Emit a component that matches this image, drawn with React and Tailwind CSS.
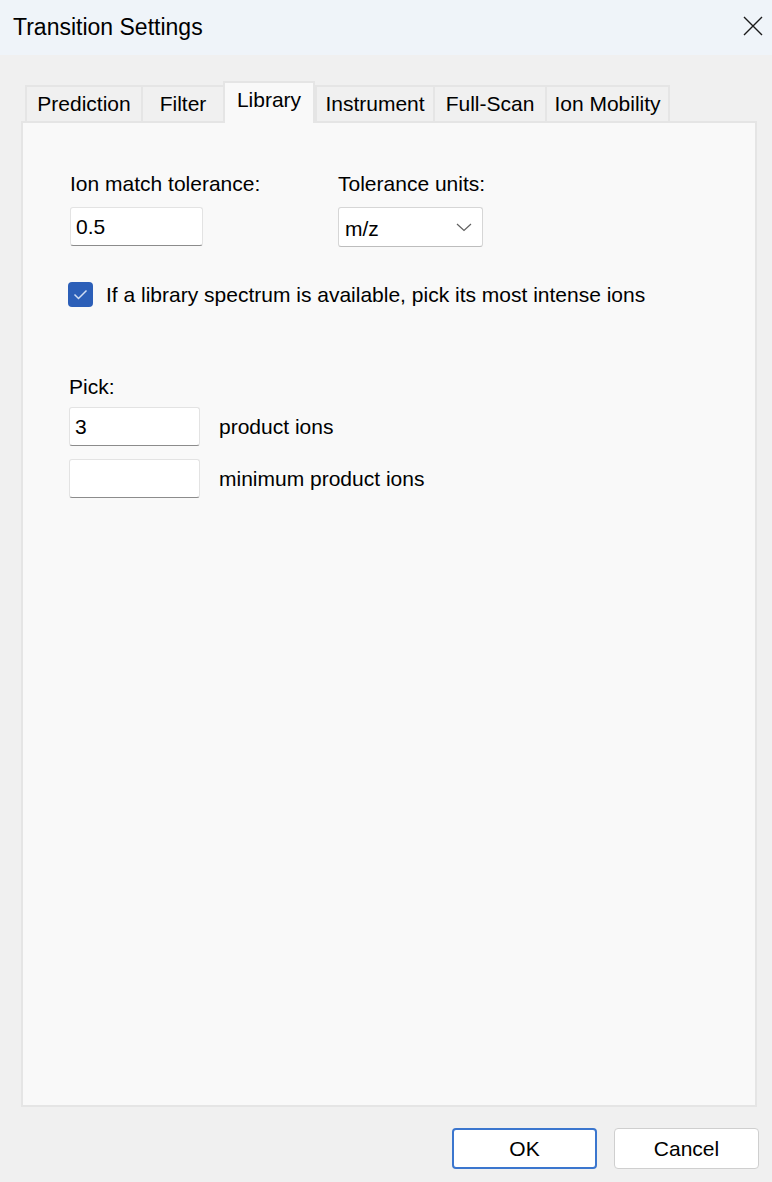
import React from 'react';

const tabs = [
    { label: 'Prediction', w: 'w-[118px]' },
    { label: 'Filter', w: 'w-[84px]' },
    { label: 'Library', w: 'w-[92px]', active: true },
    { label: 'Instrument', w: 'w-[120px]' },
    { label: 'Full-Scan', w: 'w-[114px]' },
    { label: 'Ion Mobility', w: 'w-[125px]' },
];

const TextBox = ({ value, className = '' }) => (
    <div
        className={`h-[39px] bg-white border border-[#e3e3e3] border-b-[#8c8c8c] rounded-[3px] flex items-center pl-[5px] ${className}`}
    >
        {value}
    </div>
);

const App = () => {
    return (
        <div
            className="w-[772px] h-[1182px] bg-[#f0f0f0] flex flex-col text-black text-[21px] leading-[24px]"
            style={{ fontFamily: '"Liberation Sans", Arial, sans-serif' }}
        >
            {/* title bar */}
            <div className="h-[55px] bg-[#eff4f9] flex items-center justify-between pl-[13px] pr-[9px] shrink-0">
                <span className="text-[23px] pb-[2px]">Transition Settings</span>
                <svg width="20" height="20" viewBox="0 0 20 20" className="mb-[3px]">
                    <path d="M1 1 L19 19 M19 1 L1 19" stroke="#1a1a1a" strokeWidth="1.4" fill="none" />
                </svg>
            </div>

            <div className="flex-1 flex flex-col pl-[21px] pr-[15px] pt-[26px]">
                {/* tabs */}
                <div className="flex items-end h-[40px] pl-[4px] relative z-10">
                    {tabs.map((t) =>
                        t.active ? (
                            <div
                                key={t.label}
                                className={`${t.w} h-[42px] -mb-[2px] bg-[#f9f9f9] border-2 border-b-0 border-[#e5e5e5] flex justify-center pt-[5px]`}
                            >
                                {t.label}
                            </div>
                        ) : (
                            <div
                                key={t.label}
                                className={`${t.w} h-[36px] bg-[#f0f0f0] border-2 border-b-0 border-[#e5e5e5] -mr-[2px] last:mr-0 flex items-center justify-center pb-[1px]`}
                            >
                                {t.label}
                            </div>
                        )
                    )}
                </div>

                {/* panel */}
                <div className="w-[736px] h-[986px] bg-[#f9f9f9] border-2 border-[#e5e5e5] pl-[47px] pt-[49px]">
                    <div className="flex">
                        <div className="w-[268px] flex flex-col">
                            <span>Ion match tolerance:</span>
                            <TextBox value="0.5" className="w-[133px] mt-[11px] h-[38px]" />
                        </div>
                        <div className="flex flex-col">
                            <span>Tolerance units:</span>
                            <div className="w-[145px] h-[40px] mt-[11px] bg-white border border-[#d6d6d6] border-b-[#bdbdbd] rounded-[3px] flex items-center justify-between pl-[6px] pr-[10px]">
                                <span className="pt-[3px]">m/z</span>
                                <svg width="16" height="9" viewBox="0 0 16 9">
                                    <path d="M1 1 L8 7.5 L15 1" stroke="#606060" strokeWidth="1.2" fill="none" />
                                </svg>
                            </div>
                        </div>
                    </div>

                    <div className="flex items-center mt-[35px] -ml-[2px]">
                        <div className="w-[25px] h-[25px] rounded-[4px] bg-[#2c5fb8] flex items-center justify-center">
                            <svg width="15" height="11" viewBox="0 0 15 11">
                                <path d="M1.5 5.5 L5.5 9.5 L13.5 1.5" stroke="#d2def3" strokeWidth="1.5" fill="none" />
                            </svg>
                        </div>
                        <span className="ml-[13px]">If a library spectrum is available, pick its most intense ions</span>
                    </div>

                    <div className="mt-[68px] -ml-[1px]">Pick:</div>
                    <div className="flex items-center mt-[8px] -ml-[1px]">
                        <TextBox value="3" className="w-[131px]" />
                        <span className="ml-[19px]">product ions</span>
                    </div>
                    <div className="flex items-center mt-[13px] -ml-[1px]">
                        <TextBox value="" className="w-[131px] h-[38px]" />
                        <span className="ml-[19px]">minimum product ions</span>
                    </div>
                </div>

                {/* buttons */}
                <div className="flex justify-end gap-[17px] mt-[21px]">
                    <button className="w-[145px] h-[41px] bg-white border-2 border-[#3b76ce] rounded-[4px] flex items-center justify-center">
                        OK
                    </button>
                    <button className="w-[145px] h-[41px] bg-white border border-[#cfcfcf] rounded-[4px] flex items-center justify-center -mr-[2px]">
                        Cancel
                    </button>
                </div>
            </div>
        </div>
    );
};

export default App;
